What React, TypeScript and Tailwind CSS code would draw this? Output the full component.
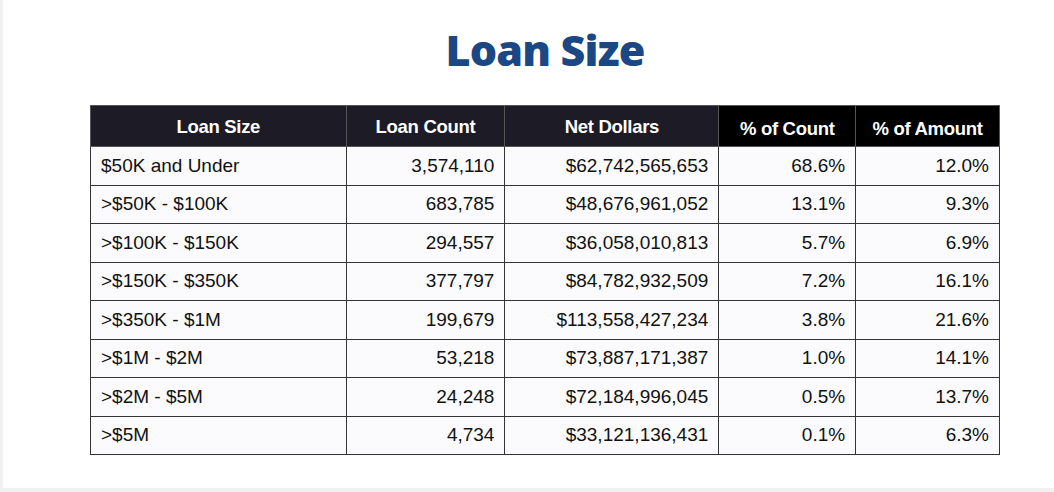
const ROWS = [
  ['$50K and Under', '3,574,110', '$62,742,565,653', '68.6%', '12.0%'],
  ['>$50K - $100K', '683,785', '$48,676,961,052', '13.1%', '9.3%'],
  ['>$100K - $150K', '294,557', '$36,058,010,813', '5.7%', '6.9%'],
  ['>$150K - $350K', '377,797', '$84,782,932,509', '7.2%', '16.1%'],
  ['>$350K - $1M', '199,679', '$113,558,427,234', '3.8%', '21.6%'],
  ['>$1M - $2M', '53,218', '$73,887,171,387', '1.0%', '14.1%'],
  ['>$2M - $5M', '24,248', '$72,184,996,045', '0.5%', '13.7%'],
  ['>$5M', '4,734', '$33,121,136,431', '0.1%', '6.3%'],
]

export default function App() {
  return (
    <div className="w-[1054px] h-[492px] bg-[#f1f1f3] pl-[3px] pb-[4px]">
      <div className="h-full bg-white pt-[24px]">
        <div className="w-[910px] ml-[87px]">
          <h1 className="text-center text-[43px] leading-[52px] font-extrabold text-[#1b4784] tracking-[-0.8px] font-['Open_Sans',sans-serif]">
            Loan Size
          </h1>
          <table className="mt-[29px] w-full border-collapse font-['Liberation_Sans',Arial,sans-serif] text-[19px] text-[#111]">
            <colgroup>
              <col className="w-[256px]" />
              <col className="w-[159px]" />
              <col className="w-[214px]" />
              <col className="w-[137px]" />
              <col className="w-[144px]" />
            </colgroup>
            <thead>
              <tr className="h-[41px] text-white text-[18.5px] tracking-[-0.3px]">
                <th className="bg-[#1d1b25] border border-[#555] align-top pt-[7px] font-bold">Loan Size</th>
                <th className="bg-[#1d1b25] border border-[#555] align-top pt-[7px] font-bold">Loan Count</th>
                <th className="bg-[#1d1b25] border border-[#555] align-top pt-[7px] font-bold">Net Dollars</th>
                <th className="bg-black border border-[#555] align-bottom pb-[3px] font-bold">% of Count</th>
                <th className="bg-black border border-[#555] align-bottom pb-[3px] font-bold">% of Amount</th>
              </tr>
            </thead>
            <tbody>
              {ROWS.map(r => (
                <tr key={r[0]} className="h-[38.5px] bg-[#fbfbfd]">
                  <td className="border border-[#333] px-[10px]">{r[0]}</td>
                  <td className="border border-[#333] px-[10px] text-right">{r[1]}</td>
                  <td className="border border-[#333] px-[10px] text-right">{r[2]}</td>
                  <td className="border border-[#333] px-[10px] text-right">{r[3]}</td>
                  <td className="border border-[#333] px-[10px] text-right">{r[4]}</td>
                </tr>
              ))}
            </tbody>
          </table>
        </div>
      </div>
    </div>
  )
}
